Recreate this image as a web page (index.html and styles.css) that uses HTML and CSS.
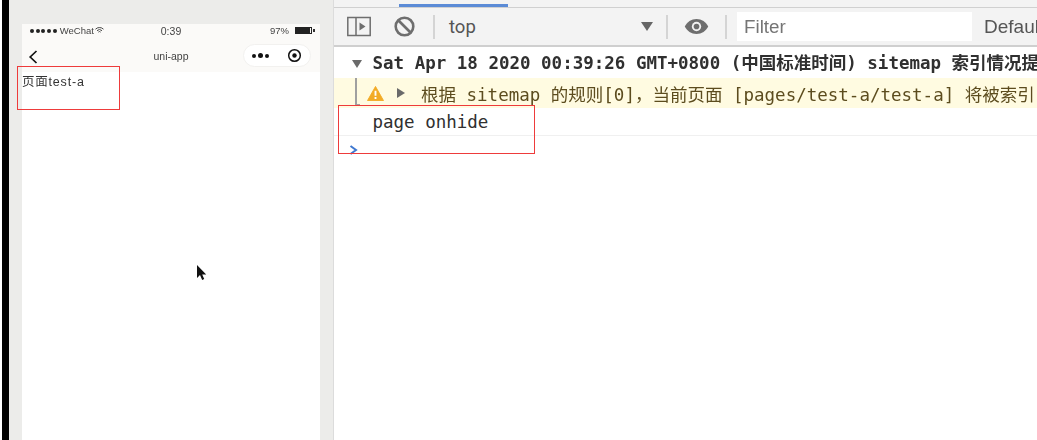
FILE: index.html
```html
<!DOCTYPE html>
<html lang="zh">
<head>
<meta charset="utf-8">
<title>uni-app</title>
<link rel="stylesheet" href="styles.css">
</head>
<body>
<div class="screen">
  <div class="edge"></div>
  <div class="simulator">
    <div class="phone">
      <div class="status">
        <div class="status-left">
          <span class="dots"><i></i><i></i><i></i><i></i><i></i></span>
          <span>WeChat</span>
          <svg class="wifi" width="9" height="7" viewBox="0 0 9 7"><path d="M.5 2.200a5.600 5.600 0 0 1 8 0M2 3.700a3.500 3.500 0 0 1 5 0M3.400 5.100a1.500 1.500 0 0 1 2.200 0" fill="none" stroke="#333" stroke-width=".9"/></svg>
        </div>
        <div class="status-time">0:39</div>
        <div class="status-right">
          <span>97%</span>
          <span class="battery"><b></b></span>
          <span class="nub"></span>
        </div>
      </div>
      <div class="nav">
        <svg class="back" width="10" height="14" viewBox="0 0 10 14"><path d="M8.500 1 2.200 7l6.300 6" fill="none" stroke="#111" stroke-width="1.700"/></svg>
        <div class="nav-title">uni-app</div>
        <div class="capsule">
          <span class="more"><i></i><i class="mid"></i><i></i></span>
          <svg width="15" height="15" viewBox="0 0 15 15"><circle cx="7.500" cy="7.500" r="5.800" fill="none" stroke="#111" stroke-width="1.500"/><circle cx="7.500" cy="7.500" r="2.200" fill="#111"/></svg>
        </div>
      </div>
      <div class="page">页面test-a</div>
    </div>
    <div class="box box-page"></div>
    <svg class="cursor" width="12" height="18" viewBox="0 0 12 18"><path d="M1 1v13l3-3 2.200 5 2-1-2-4.500h4z" fill="#111"/></svg>
  </div>
  <div class="devtools">
    <div class="tabs"><div class="tab-active"></div></div>
    <div class="toolbar">
      <svg class="ic-panel" width="24" height="21" viewBox="0 0 24 21"><rect x=".8" y="1.500" width="22.400" height="18" fill="none" stroke="#6e6e6e" stroke-width="1.500"/><path d="M9 1.500v18" stroke="#6e6e6e" stroke-width="1.500"/><path d="M12.500 6.500v8l6-4z" fill="#6e6e6e"/></svg>
      <svg class="ic-block" width="21" height="21" viewBox="0 0 21 21"><circle cx="10.500" cy="10.500" r="8.800" fill="none" stroke="#6e6e6e" stroke-width="2.600"/><path d="m4.500 4.500 12 12" stroke="#6e6e6e" stroke-width="2.600"/></svg>
      <div class="sep"></div>
      <div class="context">top</div>
      <div class="arrow"></div>
      <div class="sep"></div>
      <svg class="ic-eye" width="25" height="15" viewBox="0 0 26 16"><path d="M13 0C7.500 0 2.800 3.300 .5 8c2.300 4.700 7 8 12.500 8s10.200-3.300 12.500-8C23.200 3.300 18.500 0 13 0z" fill="#6e6e6e"/><circle cx="13" cy="8" r="5" fill="#f3f3f3"/><circle cx="13" cy="8" r="3" fill="#6e6e6e"/></svg>
      <div class="sep"></div>
      <div class="filter">Filter</div>
      <div class="levels">Default levels</div>
    </div>
    <div class="console">
      <div class="row group"><span class="tri-down"></span>Sat Apr 18 2020 00:39:26 GMT+0800 (中国标准时间) sitemap 索引情况提示</div>
      <div class="row warn">
        <span class="guide"></span>
        <svg class="warn-icon" width="17" height="15" viewBox="0 0 18 16"><path d="M9 .5 17.500 15.500H.5z" fill="#f2ab26" stroke="#f2ab26" stroke-linejoin="round"/><path d="M8 5h2v5.500H8zM8 11.800h2v2H8z" fill="#fff"/></svg>
        <span class="tri-right"></span>
        <span class="warn-text">根据 sitemap 的规则[0]，当前页面 [pages/test-a/test-a] 将被索引</span>
      </div>
      <div class="row log">page onhide</div>
      <div class="prompt">
        <svg width="10" height="10" viewBox="0 0 10 10"><path d="m1.500 1 5.500 4-5.500 4" fill="none" stroke="#3f78d0" stroke-width="2"/></svg>
      </div>
    </div>
    <div class="box box-log"></div>
  </div>
</div>
</body>
</html>
```
FILE: styles.css
```css
* { box-sizing: border-box; }
html, body { margin: 0; padding: 0; }
body { width: 1037px; height: 440px; overflow: hidden; background: #fff; font-family: "Liberation Sans", "Noto Sans CJK SC", sans-serif; }
.screen { display: flex; width: 1037px; height: 440px; }
.edge { width: 7px; margin-left: 2px; flex: none; background: #000; }
.simulator { position: relative; flex: none; width: 324px; height: 440px; padding: 24px 13px 0 13px; background: #ececea; }
.phone { height: 416px; background: #fff; display: flex; flex-direction: column; filter: blur(.4px); }
.status { display: grid; grid-template-columns: 1fr auto 1fr; align-items: center; height: 15px; padding: 0 5px 2px 5px; background: #fbfaf8; font-size: 9.500px; color: #444; }
.status-left { display: flex; align-items: center; gap: 3px; padding-left: 3px; }
.wifi { margin-left: -2px; }
.dots { display: flex; gap: 1.700px; }
.dots i { width: 4px; height: 4px; border-radius: 50%; background: #222; }
.status-time { font-size: 10.500px; }
.status-right { display: flex; justify-content: flex-end; align-items: center; }
.battery { width: 17px; height: 7px; margin-left: 6px; border: 1px solid #222; display: block; }
.battery b { display: block; width: 14px; height: 5px; background: #222; }
.nub { width: 2px; height: 3px; margin-left: 1px; background: #333; }
.nav { position: relative; display: flex; align-items: center; justify-content: space-between; height: 33px; padding: 0 9px 0 6px; background: #fbfaf8; }
.back { margin-top: 2px; }
.nav-title { position: absolute; left: 0; right: 0; text-align: center; font-size: 10.500px; color: #444; }
.capsule { display: flex; align-items: center; justify-content: space-between; width: 68px; height: 23px; padding: 0 8px 0 8px; background: #fff; border-radius: 12px; border: 1px solid #f2f1ef; }
.more { display: flex; align-items: center; gap: 2px; }
.more i { width: 4px; height: 4px; border-radius: 50%; background: #111; }
.more .mid { width: 5px; height: 5px; }
.page { padding: 1px 0 0; font-size: 12.500px; letter-spacing: .8px; line-height: 18px; color: #333; }
.box { position: absolute; border: 1px solid #ee3b3b; }
.box-page { left: 8px; top: 66px; width: 103px; height: 44px; }
.cursor { position: absolute; left: 187px; top: 264px; filter: blur(.3px); }
.devtools { position: relative; flex: 1; min-width: 0; border-left: 1px solid #dcdcdc; overflow: hidden; }
.tabs { position: relative; height: 7px; background: #f3f3f3; }
.tab-active { position: absolute; left: 65px; top: 4px; width: 109px; height: 3px; background: #5b8bd6; }
.toolbar { display: flex; align-items: center; height: 40px; padding-left: 13px; background: #f3f3f3; border-top: 1px solid #d0d0d0; border-bottom: 2px solid #cfcfcf; color: #555; font-size: 18.500px; filter: blur(.3px); }
.ic-panel { flex: none; margin-right: 23px; }
.ic-block { flex: none; margin-right: 18px; }
.sep { flex: none; width: 2px; height: 24px; background: #d4d4d4; }
.context { flex: none; width: 206px; padding-left: 14px; font-family: "Roboto", sans-serif; }
.arrow { flex: none; width: 0; height: 0; margin-right: 13px; border-left: 6.500px solid transparent; border-right: 6.500px solid transparent; border-top: 9px solid #666; }
.ic-eye { flex: none; margin: 0 16px; }
.filter { flex: none; width: 235px; height: 29px; margin-left: 10px; padding-left: 7px; background: #fff; line-height: 29px; color: #757575; font-size: 18.800px; }
.levels { flex: none; margin-left: 12px; white-space: nowrap; font-size: 19px; color: #555; }
.console { background: #fff; font-family: "DejaVu Sans Mono", "Noto Sans CJK SC", monospace; font-size: 17.500px; color: #303030; filter: blur(.3px); }
.row { white-space: nowrap; }
.group { position: relative; height: 31px; padding: 2px 0 0 38.500px; line-height: 29px; font-weight: 700; }
.tri-down { position: absolute; left: 18px; top: 13px; border-left: 5px solid transparent; border-right: 5px solid transparent; border-top: 8px solid #6a6a6a; }
.warn { position: relative; display: flex; align-items: center; height: 30px; background: #fffbe1; color: #5c4c1e; }
.guide { position: absolute; left: 21px; top: 0; bottom: 2px; width: 5px; border-left: 2px solid #a0a0a0; border-bottom: 2px solid #a0a0a0; }
.warn-icon { flex: none; margin-left: 33px; }
.tri-right { flex: none; margin-left: 13px; border-top: 5px solid transparent; border-bottom: 5px solid transparent; border-left: 8px solid #6a6a6a; }
.warn-text { margin-left: 16px; }
.log { height: 28px; padding-left: 38.500px; line-height: 28px; border-bottom: 1px solid #f0f0f0; }
.prompt { height: 21px; padding: 9px 0 0 15px; }
.prompt svg { display: block; }
.box-log { left: 4px; top: 105px; width: 197px; height: 49px; }
```
